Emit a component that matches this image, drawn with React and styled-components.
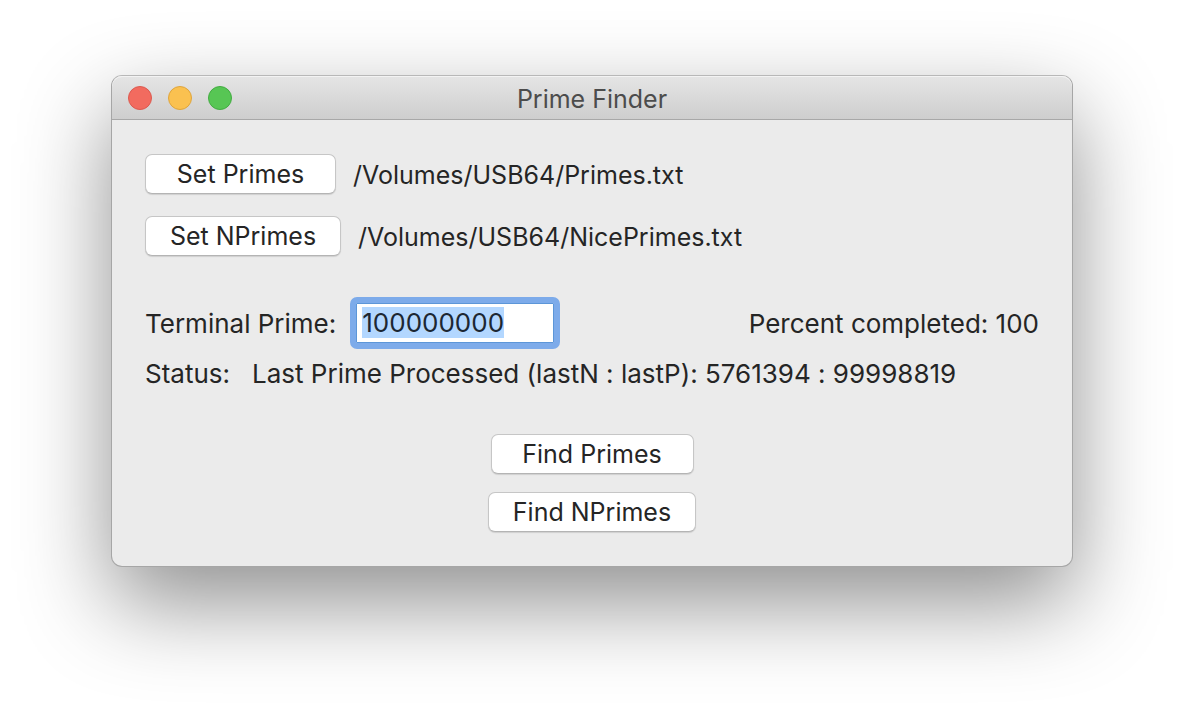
import React, { useEffect, useRef } from "react";
import styled, { createGlobalStyle } from "styled-components";

const GlobalStyle = createGlobalStyle`
  *, *::before, *::after { box-sizing: border-box; }
  body {
    margin: 0;
    background: #fff;
    color: #252525;
    font: 400 25px/32px Inter, "Liberation Sans", sans-serif;
    font-feature-settings: "calt" 0;
  }
`;

const Desktop = styled.div`
  padding: 75px 111px 147px;
`;

const Window = styled.main`
  border: 1px solid #a6a6a6;
  border-top-color: #b8b8b8;
  border-radius: 11px;
  background: #ebebeb;
  box-shadow: 0 36px 90px rgba(0, 0, 0, 0.44);
`;

const TitleBar = styled.header`
  display: grid;
  grid-template-columns: 1fr auto 1fr;
  align-items: center;
  height: 44px;
  padding: 0 16px;
  border-bottom: 1px solid #a8a8a8;
  border-radius: 10px 10px 0 0;
  background: linear-gradient(#e5e5e5, #cecece);
  box-shadow: inset 0 1px #f3f3f3;
`;

const Lights = styled.div`
  display: flex;
  gap: 16px;
`;

const Light = styled.button`
  width: 24px;
  height: 24px;
  padding: 0;
  border: 1px solid ${(p) => p.$edge};
  border-radius: 50%;
  background: ${(p) => p.$fill};
`;

const Title = styled.h1`
  margin: 0;
  padding-top: 2px;
  color: #4c4c4c;
  font-size: 25px;
  font-weight: 400;
`;

const Content = styled.form`
  padding: 34px 33px;
`;

const FileRow = styled.div`
  display: flex;
  align-items: center;
  gap: 17px;
  margin-bottom: 22px;
`;

const FilePath = styled.span`
  padding-top: 2px;
`;

const PushButton = styled.button`
  width: ${(p) => p.$width}px;
  height: 40px;
  padding: 0;
  border: 1px solid #c6c6c6;
  border-bottom-color: #b4b4b4;
  border-radius: 7px;
  background: #fff;
  box-shadow: 0 1px 1px rgba(0, 0, 0, 0.12);
  color: inherit;
  font: inherit;
  font-feature-settings: inherit;
`;

const PrimeRow = styled.div`
  display: flex;
  align-items: center;
  margin-top: 41px;
  font-size: 26px;
`;

const PrimeLabel = styled.label`
  padding-top: 2px;
`;

const PrimeInput = styled.input`
  width: 210px;
  height: 52px;
  margin-left: 14px;
  padding: 3px 6px 5px;
  border: 6px solid #7dabea;
  border-radius: 7px;
  outline: none;
  background: #fff;
  box-shadow: inset 0 0 0 1px #5c96d8;
  color: #1c2733;
  font: inherit;
  line-height: 32px;

  &::selection { background: #b3d7ff; color: #1c2733; }
`;

const Percent = styled.output`
  margin-left: auto;
  padding-top: 2px;
`;

const StatusRow = styled.div`
  display: flex;
  gap: 22px;
  margin-top: 9px;
  font-size: 26px;
`;

const Actions = styled.div`
  display: flex;
  flex-direction: column;
  align-items: center;
  gap: 18px;
  margin-top: 44px;
`;

export default function App() {
  const field = useRef(null);

  useEffect(() => {
    field.current.focus();
    field.current.select();
  }, []);

  return (
    <>
      <GlobalStyle />
      <Desktop>
        <Window>
          <TitleBar>
            <Lights>
              <Light type="button" aria-label="Close" $fill="#f26b5f" $edge="#dc5a50" />
              <Light type="button" aria-label="Minimize" $fill="#fac150" $edge="#dfa53d" />
              <Light type="button" aria-label="Zoom" $fill="#57c654" $edge="#43ac42" />
            </Lights>
            <Title>Prime Finder</Title>
          </TitleBar>
          <Content onSubmit={(e) => e.preventDefault()}>
            <FileRow>
              <PushButton type="button" $width={191}>Set Primes</PushButton>
              <FilePath>/Volumes/USB64/Primes.txt</FilePath>
            </FileRow>
            <FileRow>
              <PushButton type="button" $width={196}>Set NPrimes</PushButton>
              <FilePath>/Volumes/USB64/NicePrimes.txt</FilePath>
            </FileRow>
            <PrimeRow>
              <PrimeLabel htmlFor="terminal">Terminal Prime:</PrimeLabel>
              <PrimeInput id="terminal" ref={field} defaultValue="100000000" />
              <Percent htmlFor="terminal">Percent completed: 100</Percent>
            </PrimeRow>
            <StatusRow>
              <span>Status:</span>
              <span>Last Prime Processed (lastN : lastP): 5761394 : 99998819</span>
            </StatusRow>
            <Actions>
              <PushButton type="button" $width={203}>Find Primes</PushButton>
              <PushButton type="button" $width={208}>Find NPrimes</PushButton>
            </Actions>
          </Content>
        </Window>
      </Desktop>
    </>
  );
}
